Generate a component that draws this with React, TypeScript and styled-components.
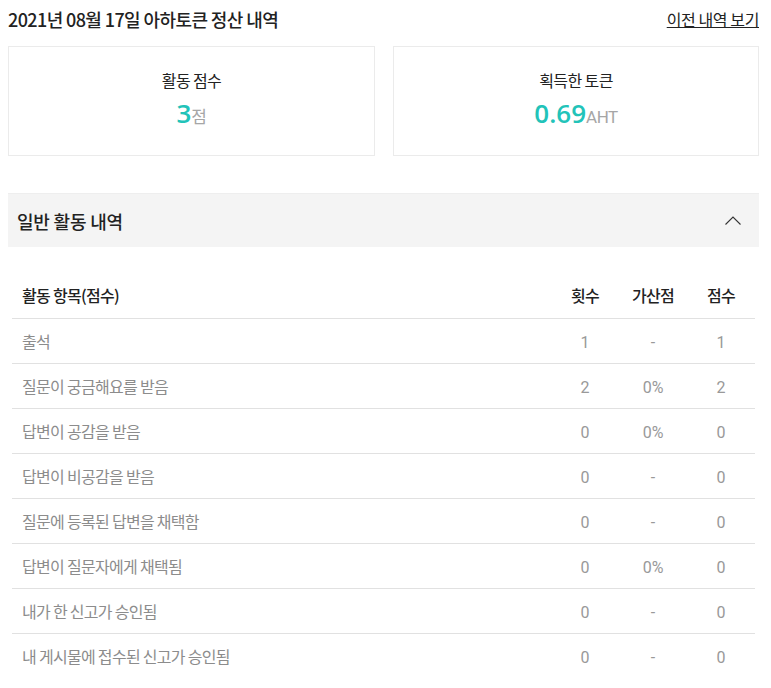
import React from "react";
import styled, { createGlobalStyle } from "styled-components";

const Global = createGlobalStyle`
  html, body { margin: 0; padding: 0; background: #fff; }
  body { font-family: "Noto Sans CJK KR", "Noto Sans", sans-serif; color: #222; }
`;

const Page = styled.div`
  width: 751px;
  margin-left: 8px;
  padding-top: 6px;
`;

const TopBar = styled.div`
  display: flex;
  justify-content: space-between;
  align-items: center;
  height: 26px;
`;

const Title = styled.h2`
  margin: 0;
  font-size: 18px;
  font-weight: 500;
  letter-spacing: -0.6px;
  color: #222;
`;

const PrevLink = styled.a`
  font-size: 16px;
  color: #222;
  text-decoration: underline;
  letter-spacing: -0.4px;
  cursor: pointer;
`;

const Cards = styled.div`
  display: grid;
  grid-template-columns: 367px 366px;
  justify-content: space-between;
  margin-top: 14px;
`;

const Card = styled.div`
  height: 110px;
  box-sizing: border-box;
  border: 1px solid #ebebeb;
  display: flex;
  flex-direction: column;
  align-items: center;
  padding-top: 22px;
`;

const CardLabel = styled.div`
  font-size: 16px;
  color: #222;
  line-height: 22px;
  letter-spacing: -0.6px;
`;

const CardValue = styled.div`
  margin-top: 6px;
  display: flex;
  align-items: baseline;
`;

const BigNum = styled.span`
  font-family: "Open Sans", "Noto Sans", sans-serif;
  font-size: 26px;
  font-weight: 600;
  color: #22c3b9;
  line-height: 32px;
`;

const Unit = styled.span`
  font-family: "Roboto", "Noto Sans CJK KR", sans-serif;
  font-size: 17px;
  color: #a6a6a6;
  letter-spacing: -0.5px;
`;

const SectionHead = styled.div`
  margin-top: 37px;
  height: 54px;
  background: #f4f4f4;
  border-top: 1px solid #eeeeee;
  box-sizing: border-box;
  display: flex;
  align-items: center;
  justify-content: space-between;
  padding: 0 18px 0 9px;
`;

const SectionTitle = styled.div`
  font-size: 18px;
  font-weight: 500;
  letter-spacing: -0.2px;
  color: #222;
`;

const Table = styled.table`
  margin: 26px 0 0 4px;
  width: 743px;
  border-collapse: collapse;
  font-size: 16px;
`;

const Th = styled.th<{ $align?: string; $w?: number }>`
  height: 45px;
  box-sizing: border-box;
  padding: 0 0 0 ${(p) => (p.$align === "left" ? "10px" : "0")};
  text-align: ${(p) => p.$align || "center"};
  font-weight: 500;
  color: #222;
  border-bottom: 1px solid #e1e1e1;
  width: ${(p) => (p.$w ? p.$w + "px" : "auto")};
  letter-spacing: -0.7px;
`;

const Td = styled.td<{ $align?: string }>`
  height: 45px;
  box-sizing: border-box;
  padding: 0 0 0 ${(p) => (p.$align === "left" ? "10px" : "0")};
  text-align: ${(p) => p.$align || "center"};
  color: #8c8c8c;
  border-bottom: 1px solid #e1e1e1;
  letter-spacing: -0.7px;
`;

const Num = styled.span`
  font-family: "Roboto", "Noto Sans", sans-serif;
  font-weight: 400;
  color: #999;
  letter-spacing: 0;
`;

const Row = styled.tr<{ $last?: boolean }>`
  & > td { border-bottom-color: ${(p) => (p.$last ? "transparent" : "#e1e1e1")}; }
`;

const rows: [string, string, string, string][] = [
  ["출석", "1", "-", "1"],
  ["질문이 궁금해요를 받음", "2", "0%", "2"],
  ["답변이 공감을 받음", "0", "0%", "0"],
  ["답변이 비공감을 받음", "0", "-", "0"],
  ["질문에 등록된 답변을 채택함", "0", "-", "0"],
  ["답변이 질문자에게 채택됨", "0", "0%", "0"],
  ["내가 한 신고가 승인됨", "0", "-", "0"],
  ["내 게시물에 접수된 신고가 승인됨", "0", "-", "0"],
];

export default function App() {
  return (
    <>
      <Global />
      <Page>
        <TopBar>
          <Title>2021년 08월 17일 아하토큰 정산 내역</Title>
          <PrevLink>이전 내역 보기</PrevLink>
        </TopBar>
        <Cards>
          <Card>
            <CardLabel>활동 점수</CardLabel>
            <CardValue>
              <BigNum>3</BigNum>
              <Unit>점</Unit>
            </CardValue>
          </Card>
          <Card>
            <CardLabel>획득한 토큰</CardLabel>
            <CardValue>
              <BigNum>0.69</BigNum>
              <Unit>AHT</Unit>
            </CardValue>
          </Card>
        </Cards>
        <SectionHead>
          <SectionTitle>일반 활동 내역</SectionTitle>
          <svg width="16" height="9" viewBox="0 0 16 9" fill="none">
            <path d="M0.5 8.5 L8 1 L15.5 8.5" stroke="#333" strokeWidth="1.1" />
          </svg>
        </SectionHead>
        <Table>
          <thead>
            <tr>
              <Th $align="left">활동 항목(점수)</Th>
              <Th $w={68}>횟수</Th>
              <Th $w={68}>가산점</Th>
              <Th $w={68}>점수</Th>
            </tr>
          </thead>
          <tbody>
            {rows.map((r, i) => (
              <Row key={i} $last={i === rows.length - 1}>
                <Td $align="left">{r[0]}</Td>
                <Td><Num>{r[1]}</Num></Td>
                <Td><Num>{r[2]}</Num></Td>
                <Td><Num>{r[3]}</Num></Td>
              </Row>
            ))}
          </tbody>
        </Table>
      </Page>
    </>
  );
}
